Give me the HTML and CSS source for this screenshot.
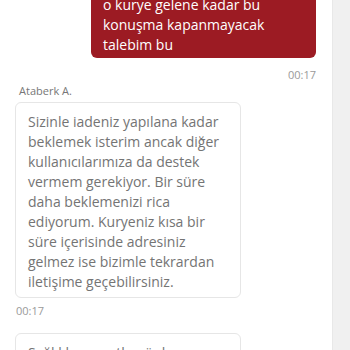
FILE: index.html
```html
<!DOCTYPE html>
<html lang="tr">
<head>
    <meta charset="UTF-8" />
    <title>Destek</title>
    <meta name="viewport" content="width=device-width, initial-scale=1" />
    <link rel="stylesheet" href="styles.css">
</head>
<body>
    <div class="page">
        <div class="chat">
            <div class="messages">
                <div class="msg out">
                    <div class="bubble">o kurye gelene kadar bu konuşma kapanmayacak talebim bu</div>
                    <div class="time">00:17</div>
                </div>

                <div class="msg in">
                    <div class="author">Ataberk A.</div>
                    <div class="bubble">Sizinle iadeniz yapılana kadar beklemek isterim ancak diğer kullanıcılarımıza da destek vermem gerekiyor. Bir süre daha beklemenizi rica ediyorum. Kuryeniz kısa bir süre içerisinde adresiniz gelmez ise bizimle tekrardan iletişime geçebilirsiniz.</div>
                    <div class="time">00:17</div>
                </div>

                <div class="msg in">
                    <div class="bubble">Sağlıklı ve mutlu günler dilerim.</div>
                </div>
            </div>
        </div>
        <div class="scrollbar"></div>
    </div>
</body>
</html>
```

FILE: styles.css
```css
body {
    margin: 0;
    font-family: "Open Sans", Arial, sans-serif;
    background-color: #fff;
    overflow: hidden;
}
.page {
    display: flex;
    height: 350px;
}
.chat {
    flex: 1;
    overflow: hidden;
    padding: 0 16px 0 15px;
}
.messages {
    display: flex;
    flex-direction: column;
    margin-top: -14px;
}
.msg {
    display: flex;
    flex-direction: column;
}
.msg.out {
    align-items: flex-end;
}
.msg.in {
    align-items: flex-start;
}
.bubble {
    font-size: 14px;
    line-height: 20px;
    border-radius: 6px;
}
.out .bubble {
    width: 201px;
    padding: 9px 12px 3px;
    background-color: #9c1b23;
    color: #fff;
}
.in .bubble {
    width: 200px;
    padding: 9px 12px 5px;
    background-color: #fff;
    color: #747474;
    border: 1px solid #e6e6e6;
}
.time {
    font-size: 11px;
    line-height: 16px;
    color: #9a9a9a;
    margin-top: 9px;
}
.in .time {
    margin: 5px 0 14px 1px;
}
.author {
    font-size: 11px;
    line-height: 16px;
    color: #777;
    margin: 0 0 3px 4px;
}
.scrollbar {
    width: 17px;
    background-color: #f0f0f0;
    border-left: 1px solid #e8e8e8;
}
```
